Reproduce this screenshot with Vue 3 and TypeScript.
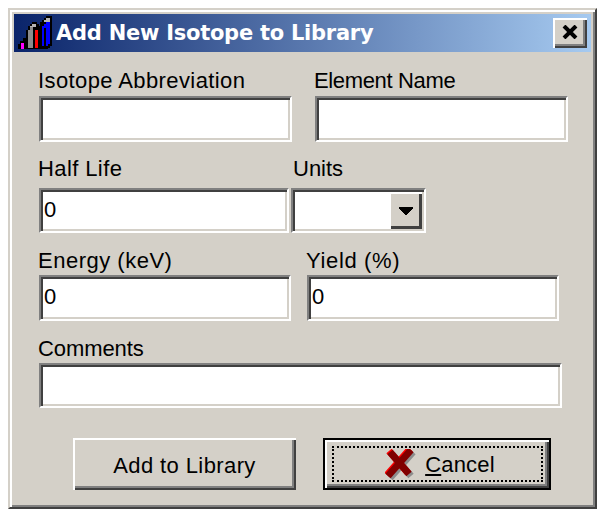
<script setup lang="ts">
const top = [
  { label: 'Isotope Abbreviation', cls: 'l-iso' },
  { label: 'Element Name', cls: 'l-elem' },
]
</script>

<template>
  <div class="page">
    <div class="window">
      <div class="titlebar">
        <svg class="app-icon" width="38" height="36" viewBox="0 0 38 36" shape-rendering="crispEdges">
          <path d="M26 3h2V1h6v30h-2v2h-2v1h-8V7h2V5h2z" fill="#000" />
          <path d="M26 5h2V3h4v4h-6z" fill="#b4b4b4" />
          <path d="M26 9h2V7h4v22h-2v2h-2V13h-2v18h-2V11h2z" fill="#0000ff" />
          <path d="M12 9h2V7h5v2h2v2h1v23H8V15h2v-4h2z" fill="#000" />
          <path d="M12 11h2V9h4v3h-6z" fill="#b4b4b4" />
          <path d="M10 15h2v-3h3v21h-5z" fill="#8c8c8c" />
          <path d="M17 15h3v18h-3z" fill="#ff0000" />
          <path d="M5 23h3v11H0v-5h2v-3h3z" fill="#000" />
          <path d="M3 28h3v6H3z" fill="#ff00ff" />
        </svg>
        <span class="title">Add New Isotope to Library</span>
        <div class="close">
          <svg width="16" height="14" viewBox="0 0 16 14">
            <path d="M2 1 L14 13 M14 1 L2 13" fill="none" stroke="#000" stroke-width="4" />
          </svg>
        </div>
      </div>

      <div class="body">
        <div class="row row-top">
          <div v-for="f in top" :key="f.label" class="field">
            <label :class="f.cls">{{ f.label }}</label>
            <div class="sunken"></div>
          </div>
        </div>

        <div class="row row-half">
          <div class="field half">
            <label class="l-half">Half Life</label>
            <div class="sunken short">0</div>
          </div>
          <div class="field units">
            <label class="l-units">Units</label>
            <div class="sunken combo">
              <div class="arrow">
                <svg width="14" height="8" viewBox="0 0 14 8" shape-rendering="crispEdges"><path d="M0 0h14v2h-1v1h-1v1h-1v1h-1v1H9v1H8v1H6V7H5V6H4V5H3V4H2V3H1V2H0z" fill="#000" /></svg>
              </div>
            </div>
          </div>
        </div>

        <div class="row row-energy">
          <div class="field energy">
            <label class="l-energy">Energy (keV)</label>
            <div class="sunken">0</div>
          </div>
          <div class="field yield">
            <label class="l-yield">Yield (%)</label>
            <div class="sunken">0</div>
          </div>
        </div>

        <div class="row row-comments">
          <div class="field comments">
            <label class="l-comments">Comments</label>
            <div class="sunken short"></div>
          </div>
        </div>

        <div class="actions">
          <button class="btn add">Add to Library</button>
          <button class="btn cancel">
            <span class="focus">
              <svg class="x-icon" width="32" height="32" viewBox="0 0 32 32">
                <g fill="none" stroke-width="7">
                  <path d="M7 5 L26 27 M28 3 L5 29" stroke="#8c8c8c" />
                  <path d="M4 2 L23 24 M25 0 L2 26" stroke="#ff0000" />
                  <path d="M5 3 L24 25 M26 1 L3 27" stroke="#800000" />
                </g>
              </svg>
              <span class="cancel-label"><u>C</u>ancel</span>
            </span>
          </button>
        </div>
      </div>
    </div>
  </div>
</template>

<style>
html, body { background: #fff; margin: 0; }
</style>

<style scoped>
.page {
  padding: 8px;
  width: 605px;
  height: 517px;
  box-sizing: border-box;
  overflow: hidden;
  font-family: "Liberation Sans", Arial, sans-serif;
  font-size: 22px;
  color: #000;
}
.window {
  width: 589px;
  height: 501px;
  box-sizing: border-box;
  background: #d4d0c8;
  border-top: 2px solid #d4d0c8;
  border-left: 2px solid #d4d0c8;
  border-right: 2px solid #404040;
  border-bottom: 2px solid #404040;
  box-shadow: inset 2px 2px 0 #fff, inset -2px -2px 0 #808080;
  padding: 4px;
}
.titlebar {
  height: 38px;
  background: linear-gradient(90deg, #0a246a, #a6caf0);
  display: flex;
  align-items: center;
  padding-left: 4px;
  padding-right: 4px;
  color: #fff;
}
.app-icon { flex: none; }
.title {
  font-family: "DejaVu Sans", sans-serif;
  font-weight: 700;
  font-size: 21px;
  letter-spacing: -0.25px;
  flex: 1;
  white-space: nowrap;
}
.close {
  width: 34px;
  height: 30px;
  box-sizing: border-box;
  background: #d4d0c8;
  display: flex;
  align-items: center;
  justify-content: center;
  padding: 0 0 2px 0;
  box-shadow: inset 2px 2px 0 #fff, inset -2px -2px 0 #404040, inset -4px -4px 0 #808080;
}
.body { padding: 0 0 0 25px; }
.row { display: flex; }
.field { display: flex; flex-direction: column; }
label { height: 30px; line-height: 30px; white-space: nowrap; }
.l-iso { margin-left: -1px; letter-spacing: 0.4px; }
.l-elem { margin-left: -1px; letter-spacing: -0.35px; }
.l-half { margin-left: -1px; letter-spacing: 0.4px; height: 34px; line-height: 30px; }
.l-units { margin-left: 2px; height: 34px; line-height: 30px; }
.l-energy { margin-left: -1px; letter-spacing: 0.5px; line-height: 32px; }
.l-yield { margin-left: -1px; letter-spacing: 0.65px; line-height: 32px; }
.l-comments { margin-left: -1px; letter-spacing: -0.1px; line-height: 32px; }
.sunken {
  box-sizing: border-box;
  height: 46px;
  background: #fff;
  border: 2px solid;
  border-color: #808080 #fff #fff #808080;
  box-shadow: inset 2px 2px 0 #404040, inset -2px -2px 0 #d4d0c8;
  padding: 2px 0 0 3px;
  line-height: 36px;
}
.short { height: 45px; }
.row-top { margin-top: 14px; gap: 23px; }
.row-top .field { width: 253px; }
.row-half { margin-top: 12px; gap: 2px; }
.half { width: 250px; }
.units { width: 135px; }
.combo { position: relative; padding: 0; height: 45px; }
.arrow {
  position: absolute;
  top: 2px;
  right: 2px;
  bottom: 2px;
  width: 33px;
  background: #d4d0c8;
  display: flex;
  align-items: center;
  justify-content: center;
  box-shadow: inset 2px 2px 0 #fff, inset -3px -3px 0 #404040;
}
.row-energy { margin-top: 12px; gap: 16px; }
.energy { width: 252px; }
.yield { width: 252px; }
.row-comments { margin-top: 12px; }
.comments { width: 523px; }
.actions { display: flex; gap: 27px; margin-top: 30px; padding-left: 34px; }
.btn {
  font: inherit;
  color: #000;
  height: 52px;
  padding: 4px 0 0;
  border: 0;
  background: #d4d0c8;
  box-sizing: border-box;
}
.add {
  width: 223px;
  letter-spacing: 0.4px;
  box-shadow: inset 2px 2px 0 #fff, inset -2px -2px 0 #404040, inset -4px -4px 0 #808080;
}
.cancel {
  width: 228px;
  border: 2px solid #000;
  box-shadow: inset 2px 2px 0 #fff, inset -2px -2px 0 #404040, inset -4px -4px 0 #808080;
  padding: 6px 6px 6px 7px;
}
.focus {
  box-sizing: border-box;
  height: 100%;
  border: 2px dotted #000;
  display: flex;
  align-items: center;
  justify-content: center;
  gap: 8px;
  padding-left: 5px;
}
.x-icon { flex: none; margin-top: 2px; }
.cancel-label { padding-top: 2px; letter-spacing: 0.2px; }
</style>
